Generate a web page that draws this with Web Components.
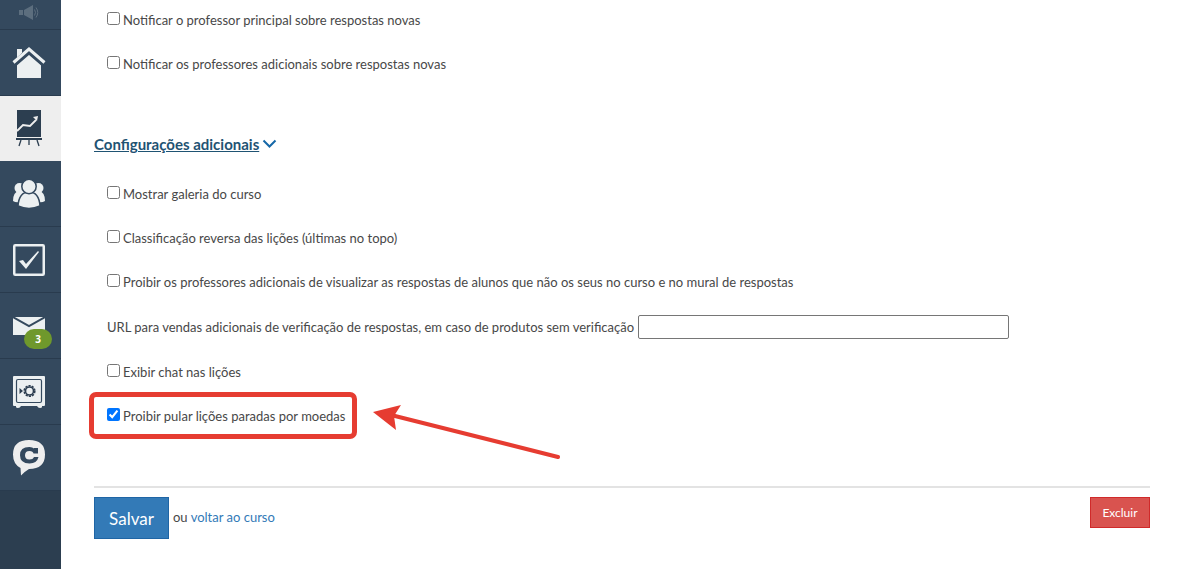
<!DOCTYPE html>
<html lang="pt-BR">
<head>
<meta charset="utf-8">
<meta name="viewport" content="width=device-width, initial-scale=1">
<title>Configurações do curso</title>
<style>
  :root {
    --nav-bg: #2c3e50;
    --nav-item: #34495e;
    --nav-line: #293b4e;
    --nav-active: #eeeeee;
    --text: #484848;
    --link: #337ab7;
    --heading: #1f5373;
    --mark: #e63c31;
  }
  body {
    margin: 0;
    font: 13px/22px Lato, "Liberation Sans", sans-serif;
    color: var(--text);
    background: #fff;
  }
</style>
</head>
<body>

<course-app>
  <side-nav slot="nav">
    <nav-item class="cut" label="Notificações">
      <svg width="22" height="16" viewBox="0 0 22 16" opacity=".22"><path fill="#ecf0f1" d="M1 5h4v5H1zM6 5l9-5v15l-9-5z"/><path fill="none" stroke="#ecf0f1" d="M16.500 4.500q2 3 0 6M18 2.500q3.500 5 0 10"/></svg>
    </nav-item>
    <nav-item label="Início">
      <svg width="34" height="32" viewBox="0 0 34 32"><path fill="#ecf0f1" d="M5 2h5v4L5 11zM5 17 17 6l12 11v14H5z"/><path fill="none" stroke="#34495e" stroke-width="6" d="M2 17 17 4l15 13"/><path fill="none" stroke="#ecf0f1" stroke-width="3" d="M1.500 15.500 17 2l15.500 13.500"/></svg>
    </nav-item>
    <nav-item active label="Treinamentos">
      <svg width="28" height="38" viewBox="0 0 28 38"><path fill="#2c3e50" d="M2 1h24v27H2zM1 29h26v2H1z"/><path fill="none" stroke="#eee" stroke-width="1.800" d="m2 22 6-6 7 1 6-6"/><path fill="#eee" d="m18 8 5-1-1 5z"/><path fill="none" stroke="#2c3e50" stroke-width="1.300" d="m6 31-2 6M14 31v5m8-5 2 6"/></svg>
    </nav-item>
    <nav-item label="Usuários">
      <svg width="34" height="30" viewBox="0 0 34 30" fill="#ecf0f1"><circle cx="7.500" cy="9" r="5"/><circle cx="26.500" cy="9" r="5"/><path d="M1 22q0-9 6-10h20q6 1 6 10-3 2-7 1H8q-4 1-7-1z"/><g stroke="#34495e" stroke-width="1.500"><path d="M6 27q1-14 11-14t11 14q-11 5-22 0z"/><circle cx="17" cy="7.500" r="7.200"/></g></svg>
    </nav-item>
    <nav-item label="Tarefas">
      <svg width="32" height="32" viewBox="0 0 32 32"><rect x="1.250" y="1.250" width="29.500" height="29.500" rx="1" fill="none" stroke="#ecf0f1" stroke-width="2.500"/><path fill="#ecf0f1" d="m6 17 4-1 3 4L25 7l1 1-13 17z"/></svg>
    </nav-item>
    <nav-item label="Mensagens" badge="3">
      <svg width="32" height="20" viewBox="0 0 32 20"><path fill="#ecf0f1" d="M0 1h32v18H0z"/><path fill="none" stroke="#34495e" stroke-width="2" d="m0 1 16 9L32 1"/></svg>
    </nav-item>
    <nav-item label="Vendas">
      <svg width="32" height="32" viewBox="0 0 32 32"><path fill="#ecf0f1" d="M1 0h30q1 0 1 1v28q0 1-1 1h-2v1q0 1-2 1t-3-2H8q-1 2-3 2t-2-1v-1H1q-1 0-1-1V1q0-1 1-1z"/><rect x="3.500" y="3.500" width="25" height="23" rx="1.500" fill="none" stroke="#34495e" stroke-width="1.200"/><circle cx="16.500" cy="15" r="4" fill="none" stroke="#2c3e50" stroke-width="1.600"/><circle cx="16.500" cy="15" r="5.300" fill="none" stroke="#2c3e50" stroke-width="1.600" stroke-dasharray="2.200 1.130"/><path fill="#2c3e50" d="m6.500 12 3.500 3-3.500 3z"/></svg>
    </nav-item>
    <nav-item label="Chatium">
      <svg width="32" height="36" viewBox="0 0 32 36"><path fill="#eee" d="M16 0q16 0 16 14.500T16 29q-5 3-8 6.500L7.500 28Q0 24 0 14.500 0 0 16 0z"/><path fill="#34495e" d="M25 8v5.500h-4.500Q20 11 16.500 11q-4.500 0-4.500 4.300t4.500 4.200q3.500 0 4.500-2.500h4.500Q24 23.500 16.500 23.500 7 23.500 7 15.200T16.500 7q3 0 4.500 1.500V8z"/></svg>
    </nav-item>
  </side-nav>

  <option-list>
    <check-option>Notificar o professor principal sobre respostas novas</check-option>
    <check-option>Notificar os professores adicionais sobre respostas novas</check-option>
  </option-list>

  <section-toggle>Configurações adicionais</section-toggle>

  <option-list>
    <check-option>Mostrar galeria do curso</check-option>
    <check-option>Classificação reversa das lições (últimas no topo)</check-option>
    <check-option>Proibir os professores adicionais de visualizar as respostas de alunos que não os seus no curso e no mural de respostas</check-option>
    <text-option>URL para vendas adicionais de verificação de respostas, em caso de produtos sem verificação</text-option>
    <check-option>Exibir chat nas lições</check-option>
    <check-option checked marked>Proibir pular lições paradas por moedas</check-option>
  </option-list>

  <form-actions></form-actions>
</course-app>

<script>
// Attaches an open shadow root and fills it with the element's styles and markup.
class BaseElement extends HTMLElement {
  constructor() {
    super();
    this.attachShadow({ mode: "open" });
    this.shadowRoot.innerHTML = `<style>${this.constructor.css}</style>${this.constructor.html}`;
  }
}

class CourseApp extends BaseElement {
  static css = `
    :host { display: flex; min-height: 100vh; }
    main { flex: 1; min-width: 0; box-sizing: border-box; padding: 9px 50px 30px 33px; }
  `;
  static html = `<slot name="nav"></slot><main><slot></slot></main>`;
}

class SideNav extends BaseElement {
  static css = `
    :host { flex: none; width: 61px; background: var(--nav-bg); }
    nav { display: flex; flex-direction: column; }
  `;
  static html = `<nav><slot></slot></nav>`;
}

class NavItem extends BaseElement {
  static css = `
    :host { display: block; height: 66px; }
    :host(.cut) { height: 30px; }
    :host([active]) { height: 65px; }
    a {
      position: relative;
      display: flex;
      align-items: center;
      justify-content: center;
      box-sizing: border-box;
      height: 100%;
      padding-right: 3px;
      border-bottom: 1px solid var(--nav-line);
      background: var(--nav-item);
    }
    :host(.cut) a { padding-bottom: 4px; }
    :host([active]) a { background: var(--nav-active); border-color: var(--nav-active); }
    .badge {
      position: absolute;
      right: 9px;
      bottom: 9px;
      width: 28px;
      border-radius: 10px;
      background: #6f982c;
      color: #fff;
      font: bold 10px/20px "Open Sans", sans-serif;
      text-align: center;
    }
    .badge:empty { display: none; }
  `;
  static html = `<a href="#"><slot></slot><span class="badge"></span></a>`;

  connectedCallback() {
    this.shadowRoot.querySelector("a").setAttribute("aria-label", this.getAttribute("label"));
    this.shadowRoot.querySelector(".badge").textContent = this.getAttribute("badge") ?? "";
  }
}

class OptionList extends BaseElement {
  static css = `
    :host { display: flex; flex-direction: column; gap: 22px; padding-left: 13px; }
  `;
  static html = `<slot></slot>`;
}

class CheckOption extends BaseElement {
  static css = `
    :host { display: block; position: relative; }
    label { display: inline-flex; align-items: flex-start; gap: 3px; }
    input { flex: none; width: 13px; height: 13px; margin: 3px 0 0; }
    .mark, svg { display: none; position: absolute; pointer-events: none; }
    :host([marked]) .mark {
      display: block;
      box-sizing: border-box;
      left: -18px;
      top: -13px;
      width: 268px;
      height: 47px;
      border: 5px solid var(--mark);
      border-radius: 7px;
    }
    :host([marked]) svg { display: block; left: 266px; top: 0; }
  `;
  static html = `
    <label><input type="checkbox"><span><slot></slot></span></label>
    <span class="mark"></span>
    <svg width="190" height="56" viewBox="0 0 190 56">
      <path d="M18 10 185 52" stroke="#e63c31" stroke-width="4" stroke-linecap="round"/>
      <path d="M0 7 28 0l-7 11 2 14z" fill="#e63c31"/>
    </svg>`;

  connectedCallback() {
    this.shadowRoot.querySelector("input").checked = this.hasAttribute("checked");
  }
}

class TextOption extends BaseElement {
  static css = `
    :host { display: flex; align-items: center; gap: 4px; }
    input {
      box-sizing: border-box;
      width: 371px;
      min-width: 0;
      height: 24px;
      border: 1px solid #767676;
      border-radius: 2px;
      font: inherit;
    }
  `;
  static html = `<label for="field"><slot></slot></label><input id="field" type="text">`;
}

class SectionToggle extends BaseElement {
  static css = `
    :host { display: block; margin: 58px 0 27px; }
    a {
      display: inline-flex;
      align-items: center;
      gap: 3px;
      color: var(--heading);
      font-size: 15px;
      font-weight: bold;
      text-decoration: none;
    }
    span { text-decoration: underline; }
  `;
  static html = `
    <a href="#"><span><slot></slot></span>
      <svg width="15" height="10" viewBox="0 0 15 10"><path d="m1.500 1.500 6 6 6-6" fill="none" stroke="#1668a8" stroke-width="2"/></svg>
    </a>`;
}

class FormActions extends BaseElement {
  static css = `
    :host {
      display: flex;
      align-items: flex-start;
      margin-top: 59px;
      padding-top: 9px;
      border-top: 2px solid #e3e3e3;
    }
    button { border: 1px solid; padding: 0; color: #fff; font-family: inherit; }
    .save { width: 75px; height: 42px; background: #337ab7; border-color: #1f65a5; font-size: 17px; }
    .delete { width: 60px; height: 31px; margin-left: auto; background: #d9534f; border-color: #d02a2a; font-size: 12px; }
    p { margin: 9px 0 0 4px; }
    a { color: var(--link); text-decoration: none; }
  `;
  static html = `
    <button class="save" type="button">Salvar</button>
    <p>ou <a href="#">voltar ao curso</a></p>
    <button class="delete" type="button">Excluir</button>`;
}

customElements.define("course-app", CourseApp);
customElements.define("side-nav", SideNav);
customElements.define("nav-item", NavItem);
customElements.define("option-list", OptionList);
customElements.define("check-option", CheckOption);
customElements.define("text-option", TextOption);
customElements.define("section-toggle", SectionToggle);
customElements.define("form-actions", FormActions);
</script>
</body>
</html>
